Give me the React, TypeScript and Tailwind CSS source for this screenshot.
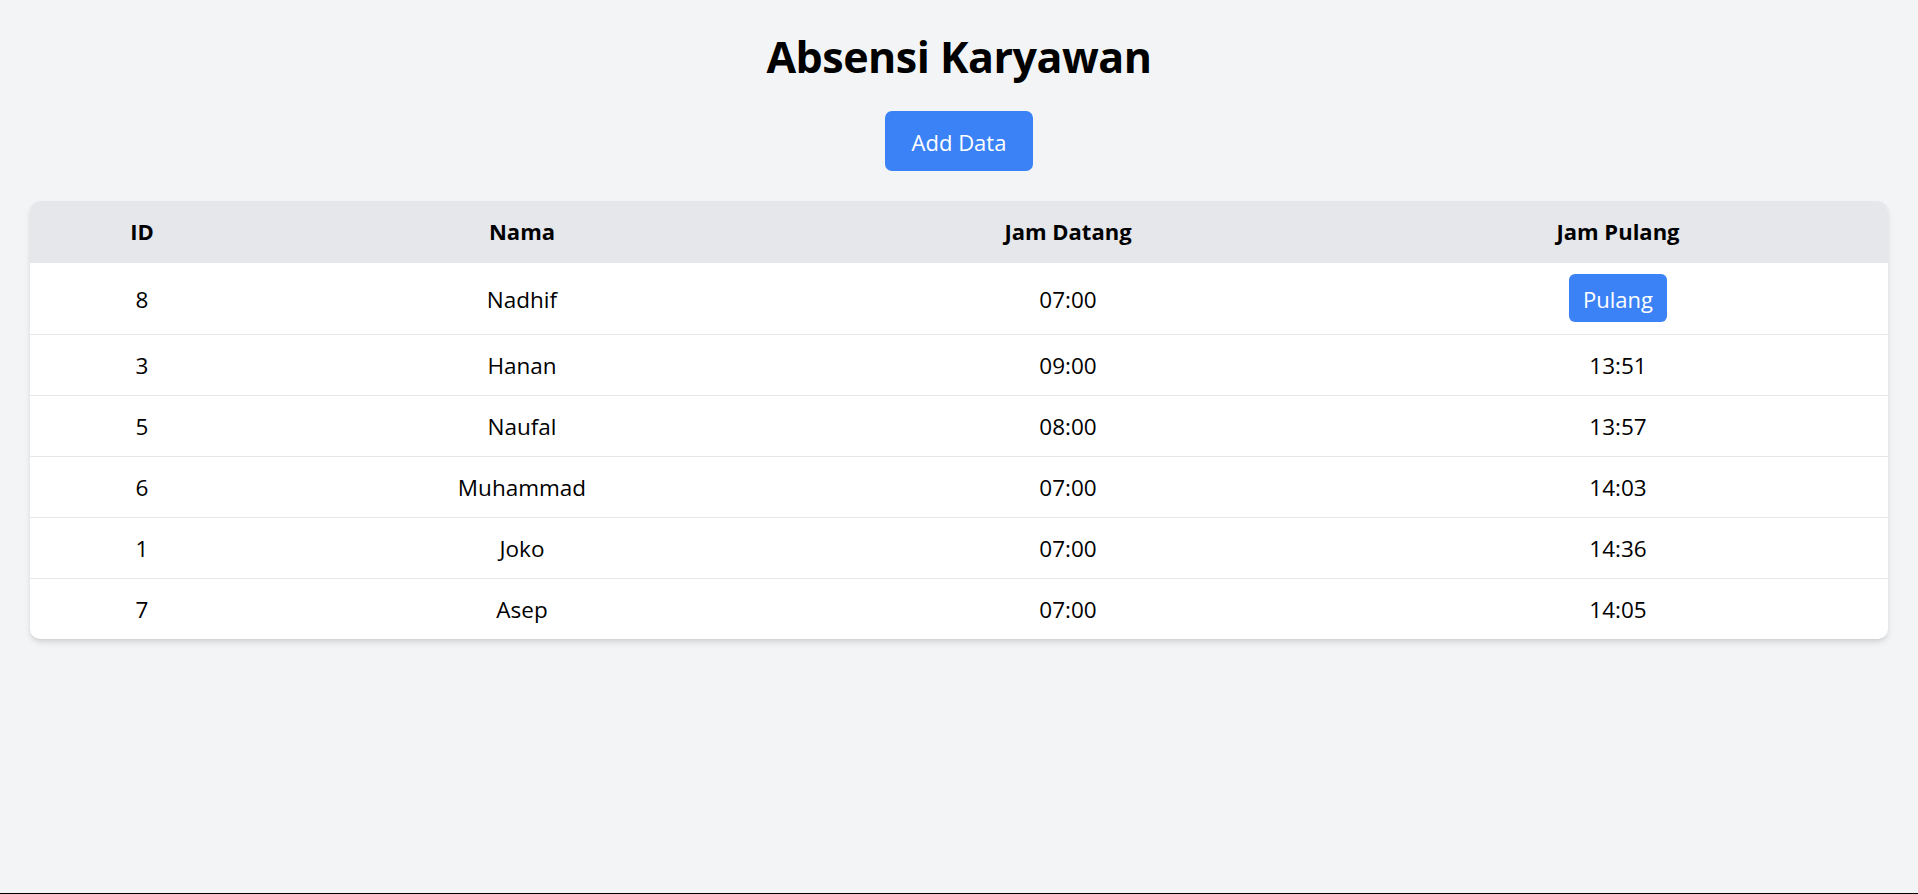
const rows = [
  { id: 8, nama: 'Nadhif', datang: '07:00', pulang: null },
  { id: 3, nama: 'Hanan', datang: '09:00', pulang: '13:51' },
  { id: 5, nama: 'Naufal', datang: '08:00', pulang: '13:57' },
  { id: 6, nama: 'Muhammad', datang: '07:00', pulang: '14:03' },
  { id: 1, nama: 'Joko', datang: '07:00', pulang: '14:36' },
  { id: 7, nama: 'Asep', datang: '07:00', pulang: '14:05' },
];

export default function App() {
  return (
    <div className="min-h-screen bg-[#f3f4f6] border-b border-black px-[30px] pt-[30px] font-['Open_Sans',_'Noto_Sans',sans-serif] text-black">
      <h1 className="text-center text-[43px] leading-[50px] pt-[2px] font-bold tracking-[-0.5px]">Absensi Karyawan</h1>
      <div className="flex justify-center mt-[29px] mb-[30px]">
        <button className="h-[60px] w-[148px] pt-[2px] rounded-[7px] bg-[#3b82f6] text-white text-[22px]">Add Data</button>
      </div>
      <div className="rounded-[10px] bg-white shadow-[0_4px_7px_-1px_rgba(0,0,0,0.12),0_2px_4px_-2px_rgba(0,0,0,0.1)] overflow-hidden">
        <table className="w-full table-fixed border-collapse text-center">
          <thead>
            <tr className="bg-[#e5e7eb] h-[61px]">
              <th className="w-[224px] text-[22px] font-bold">ID</th>
              <th className="w-[536px] text-[22px] font-bold">Nama</th>
              <th className="w-[556px] text-[22px] font-bold">Jam Datang</th>
              <th className="w-[544px] text-[22px] font-bold">Jam Pulang</th>
            </tr>
          </thead>
          <tbody className="text-[22.5px]">
            {rows.map((r, i) => (
              <tr key={r.id} className={(i === 0 ? 'h-[72px]' : 'h-[61px]') + ' border-t border-[#e5e7eb]'}>
                <td className="pt-[3px]">{r.id}</td>
                <td className="pt-[3px]">{r.nama}</td>
                <td className="pt-[3px]">{r.datang}</td>
                <td>
                  {r.pulang ? (
                    <span className="inline-block pt-[3px]">{r.pulang}</span>
                  ) : (
                    <button className="h-[48px] px-[14px] pt-[2px] rounded-[6px] bg-[#3b82f6] text-white text-[22px]">Pulang</button>
                  )}
                </td>
              </tr>
            ))}
          </tbody>
        </table>
      </div>
    </div>
  );
}
